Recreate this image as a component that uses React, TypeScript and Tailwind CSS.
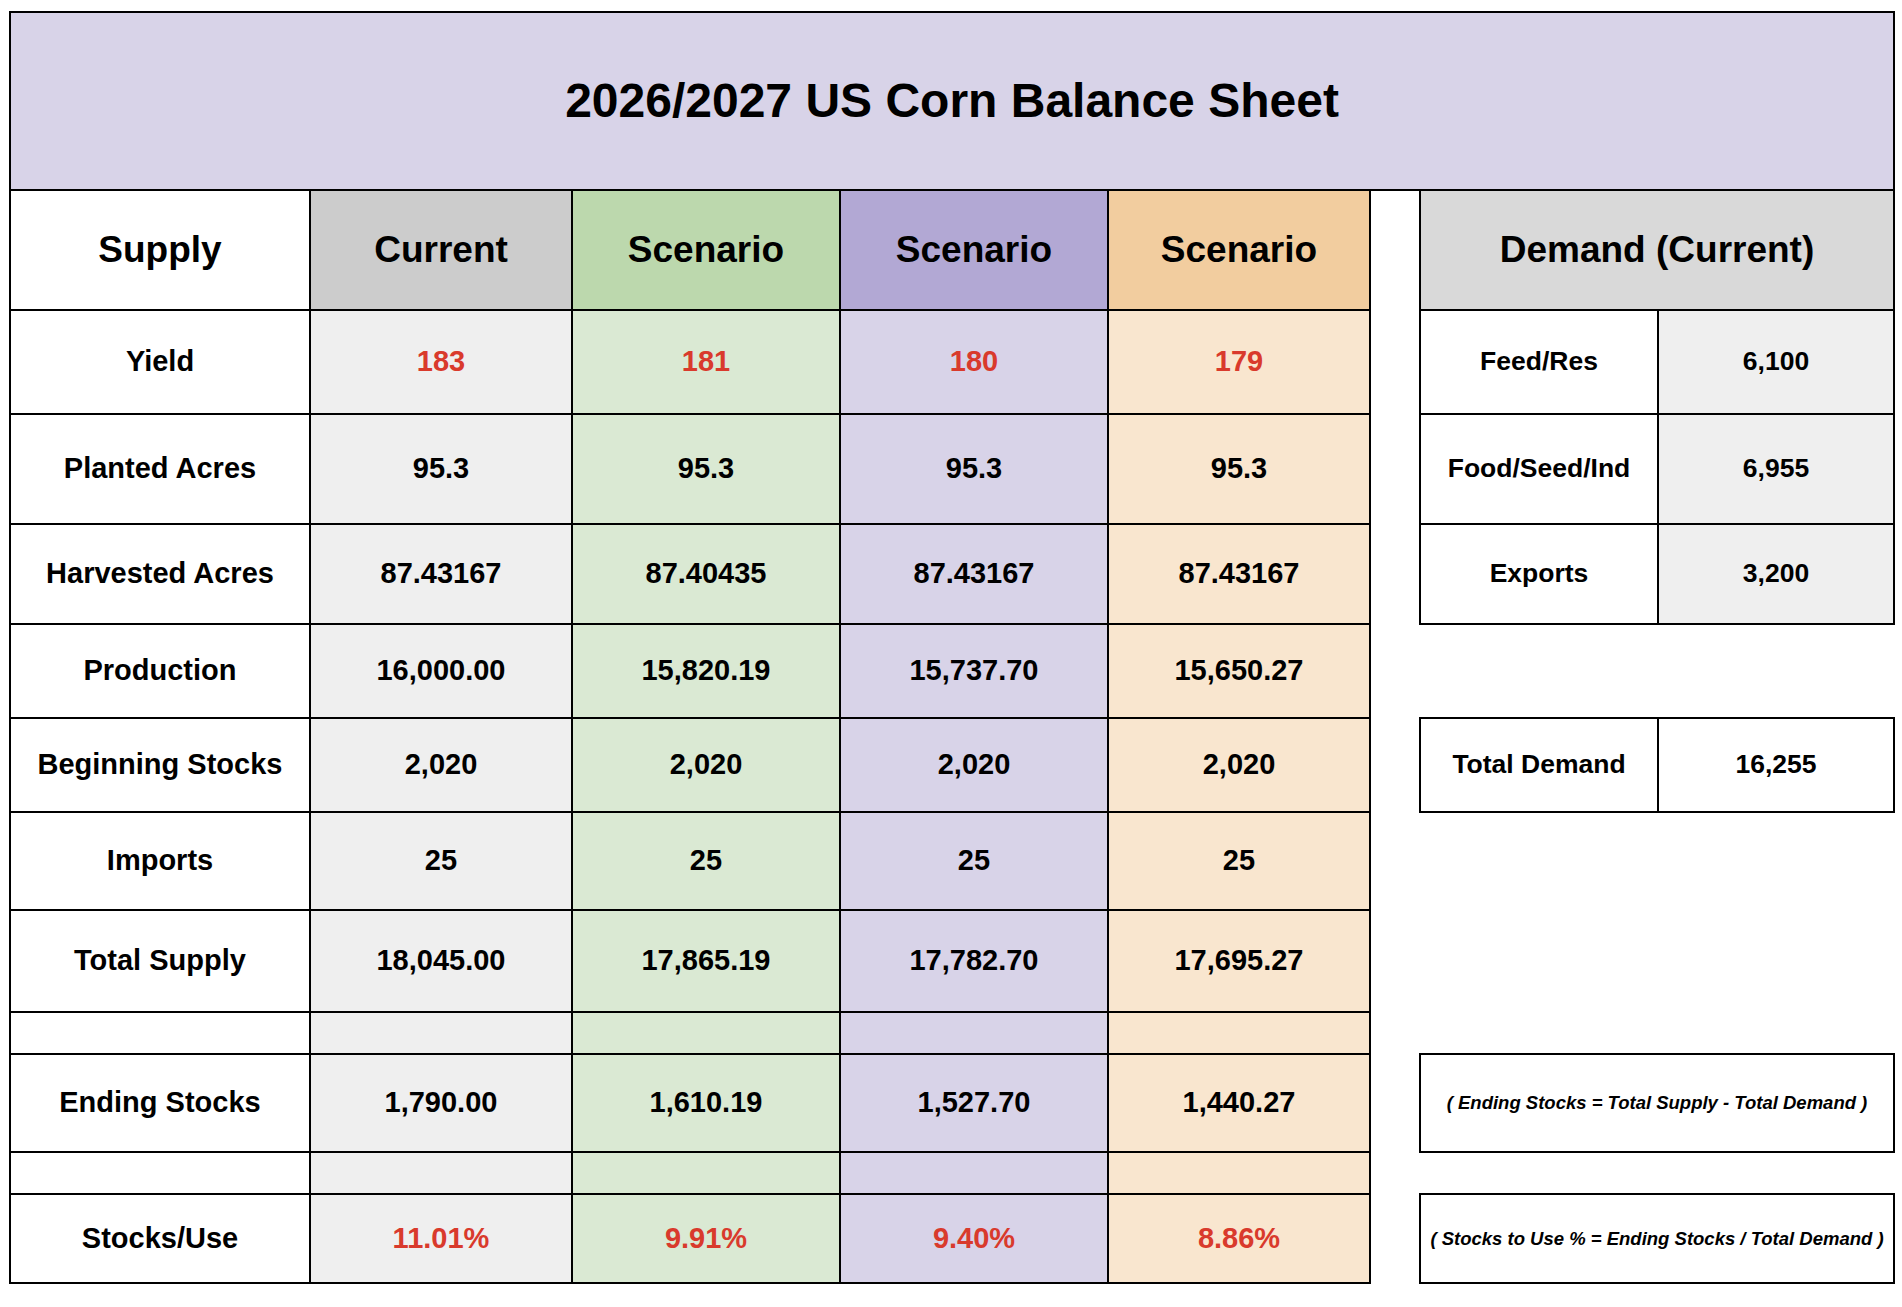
import React from "react";

type Row = { label: string; vals: string[]; red?: boolean; h: string };

const rows: Row[] = [
  { label: "Yield", vals: ["183", "181", "180", "179"], red: true, h: "" },
  { label: "Planted Acres", vals: ["95.3", "95.3", "95.3", "95.3"], h: "" },
  { label: "Harvested Acres", vals: ["87.43167", "87.40435", "87.43167", "87.43167"], h: "" },
  { label: "Production", vals: ["16,000.00", "15,820.19", "15,737.70", "15,650.27"], h: "" },
  { label: "Beginning Stocks", vals: ["2,020", "2,020", "2,020", "2,020"], h: "" },
  { label: "Imports", vals: ["25", "25", "25", "25"], h: "" },
  { label: "Total Supply", vals: ["18,045.00", "17,865.19", "17,782.70", "17,695.27"], h: "" },
  { label: "", vals: ["", "", "", ""], h: "" },
  { label: "Ending Stocks", vals: ["1,790.00", "1,610.19", "1,527.70", "1,440.27"], h: "" },
  { label: "", vals: ["", "", "", ""], h: "" },
  { label: "Stocks/Use", vals: ["11.01%", "9.91%", "9.40%", "8.86%"], red: true, h: "" },
];

const bodyBg = ["bg-[#efefef]", "bg-[#dae9d3]", "bg-[#d8d3e8]", "bg-[#f9e6cf]"];
const headBg = ["bg-[#cccccc]", "bg-[#bcd8ad]", "bg-[#b2a8d4]", "bg-[#f2cd9f]"];

const cell = "flex items-center justify-center border-black border-r-2 border-b-2";

export default function App() {
  return (
    <div
      className="bg-white w-[1902px] h-[1307px] pl-[9px] pt-[11px] text-black font-bold"
      style={{ fontFamily: '"Liberation Sans", Arial, sans-serif' }}
    >
      <div className="w-[1886px] h-[180px] border-2 border-black bg-[#d8d3e8] flex items-center justify-center text-[48px]">
        2026/2027 US Corn Balance Sheet
      </div>
      <div className="grid grid-cols-[302px_262px_268px_268px_262px_48px_240px_236px] grid-rows-[120px_104px_110px_100px_94px_94px_98px_102px_42px_98px_42px_89px]">
        {/* header row */}
        <div className={`${cell} border-l-2 bg-white text-[37px]`}>Supply</div>
        <div className={`${cell} ${headBg[0]} text-[37px]`}>Current</div>
        <div className={`${cell} ${headBg[1]} text-[37px]`}>Scenario</div>
        <div className={`${cell} ${headBg[2]} text-[37px]`}>Scenario</div>
        <div className={`${cell} ${headBg[3]} text-[37px]`}>Scenario</div>
        <div />
        <div className={`${cell} col-span-2 border-l-2 bg-[#d9d9d9] text-[37px]`}>Demand (Current)</div>

        {rows.map((r, i) => (
          <React.Fragment key={i}>
            <div className={`${cell} border-l-2 bg-white text-[29px]`}>{r.label}</div>
            {r.vals.map((v, j) => (
              <div
                key={j}
                className={`${cell} ${bodyBg[j]} text-[29px] ${r.red ? "text-[#d93a2c]" : ""}`}
              >
                {v}
              </div>
            ))}
            <div />
            {i === 0 && (
              <>
                <div className={`${cell} border-l-2 bg-white text-[26.5px]`}>Feed/Res</div>
                <div className={`${cell} bg-[#efefef] text-[26.5px]`}>6,100</div>
              </>
            )}
            {i === 1 && (
              <>
                <div className={`${cell} border-l-2 bg-white text-[26.5px]`}>Food/Seed/Ind</div>
                <div className={`${cell} bg-[#efefef] text-[26.5px]`}>6,955</div>
              </>
            )}
            {i === 2 && (
              <>
                <div className={`${cell} border-l-2 bg-white text-[26.5px]`}>Exports</div>
                <div className={`${cell} bg-[#efefef] text-[26.5px]`}>3,200</div>
              </>
            )}
            {i === 4 && (
              <>
                <div className={`${cell} border-l-2 border-t-2 -mt-[2px] bg-white text-[26.5px]`}>Total Demand</div>
                <div className={`${cell} border-t-2 -mt-[2px] bg-white text-[26.5px]`}>16,255</div>
              </>
            )}
            {i === 8 && (
              <div className={`${cell} col-span-2 border-l-2 border-t-2 -mt-[2px] bg-white text-[18.5px] italic`}>
                ( Ending Stocks = Total Supply - Total Demand )
              </div>
            )}
            {i === 10 && (
              <div className={`${cell} col-span-2 border-l-2 border-t-2 -mt-[2px] bg-white text-[18.5px] italic`}>
                ( Stocks to Use % = Ending Stocks / Total Demand )
              </div>
            )}
            {(i === 3 || i === 5 || i === 6 || i === 7 || i === 9) && (
              <>
                <div />
                <div />
              </>
            )}
          </React.Fragment>
        ))}
      </div>
    </div>
  );
}
